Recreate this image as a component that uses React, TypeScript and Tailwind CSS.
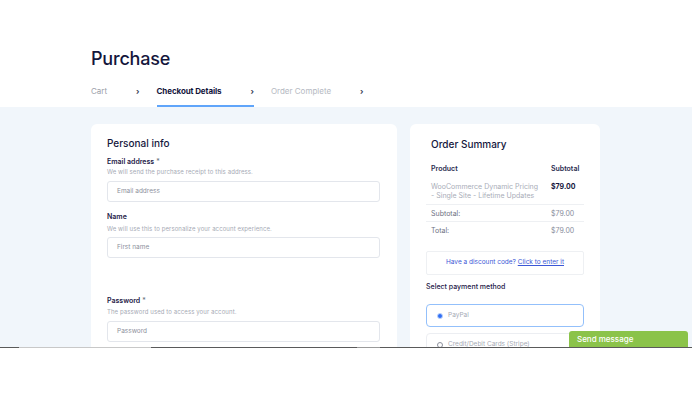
import React from "react";

const font = { fontFamily: "Inter, 'Noto Sans', sans-serif" };

function Tab({ label, active, muted }: { label: string; active?: boolean; muted?: boolean }) {
  return (
    <div
      className={
        "flex items-center h-[30px] border-b-2 " +
        (active ? "border-[#60a5fa]" : "border-transparent")
      }
    >
      <span
        className={
          "text-[8px] leading-[10px] " +
          (active ? "font-bold text-[#14163c] tracking-[-0.1px]" : muted ? "text-[#b5b9c2]" : "text-[#9ca0aa]")
        }
      >
        {label}
      </span>
      <span className="ml-[29px] text-[8px] leading-[10px] font-bold text-[#333a52]">›</span>
    </div>
  );
}

function Field({
  label,
  required,
  desc,
  placeholder,
  labelMt,
  descMt,
  inputMt,
}: {
  label: string;
  required?: boolean;
  desc: string;
  placeholder: string;
  labelMt: string;
  descMt: string;
  inputMt: string;
}) {
  return (
    <div>
      <div className={labelMt + " text-[7px] leading-[10px] font-semibold text-[#1e2047]"}>
        {label}
        {required && <span className="font-normal text-[#6b6f80]"> *</span>}
      </div>
      <div className={descMt + " text-[6px] leading-[8px] tracking-[0.1px] text-[#a6aab5]"}>{desc}</div>
      <div
        className={
          inputMt +
          " h-[21px] rounded-[3px] border border-[#e3e6ec] flex items-center pl-[9px] text-[6.5px] text-[#8d919d]"
        }
      >
        {placeholder}
      </div>
    </div>
  );
}

export default function App() {
  return (
    <div className="relative w-[692px] h-[399px] overflow-hidden bg-white" style={font}>
      {/* Header */}
      <div className="h-[107px] bg-white pl-[91px] flex flex-col">
        <h1 className="mt-[48px] text-[18px] leading-[22px] font-medium text-[#14163c] tracking-[-0.2px]">
          Purchase
        </h1>
        <div className="mt-[7px] flex gap-[17px]">
          <Tab label="Cart" />
          <Tab label="Checkout Details" active />
          <Tab label="Order Complete" muted />
        </div>
      </div>

      {/* Main */}
      <div className="h-[240px] bg-[#f1f6fb] overflow-hidden pl-[91px] pt-[17px] flex gap-[13px] items-start">
        {/* Left card */}
        <div className="w-[306px] h-[300px] bg-white rounded-[6px] pl-[16px] pr-[17px] pt-[13px]">
          <h2 className="text-[10px] leading-[12px] font-medium text-[#14163c]">Personal info</h2>
          <Field
            label="Email address"
            required
            desc="We will send the purchase receipt to this address."
            placeholder="Email address"
            labelMt="mt-[8px]"
            descMt="mt-[1px]"
            inputMt="mt-[5px]"
          />
          <Field
            label="Name"
            desc="We will use this to personalize your account experience."
            placeholder="First name"
            labelMt="mt-[10px]"
            descMt="mt-[3px]"
            inputMt="mt-[4px]"
          />
          <Field
            label="Password"
            required
            desc="The password used to access your account."
            placeholder="Password"
            labelMt="mt-[38px]"
            descMt="mt-[2px]"
            inputMt="mt-[5px]"
          />
        </div>

        {/* Right card */}
        <div className="w-[190px] h-[300px] bg-white rounded-[6px] px-[16px] pt-[14px]">
          <h2 className="pl-[5px] text-[10px] leading-[12px] font-medium text-[#14163c]">Order Summary</h2>
          <div className="mt-[14px] grid grid-cols-[125px_1fr] text-[7px] leading-[9px]">
            <div className="pl-[5px] font-semibold text-[#2a2c4f]">Product</div>
            <div className="font-semibold text-[#2a2c4f]">Subtotal</div>
            <div className="col-span-2 grid grid-cols-[125px_1fr] mt-[9px] pb-[4px] border-b border-[#eef0f3]">
              <div className="pl-[5px] text-[#a9adb8]">
                WooCommerce Dynamic Pricing
                <br />- Single Site - Lifetime Updates
              </div>
              <div className="font-bold text-[#14163c]">$79.00</div>
            </div>
            <div className="col-span-2 grid grid-cols-[125px_1fr] pt-[4px] pb-[3px] border-b border-[#eef0f3]">
              <div className="pl-[5px] text-[#6d7183]">Subtotal:</div>
              <div className="text-[#8a8e9c]">$79.00</div>
            </div>
            <div className="col-span-2 grid grid-cols-[125px_1fr] pt-[4px]">
              <div className="pl-[5px] text-[#6d7183]">Total:</div>
              <div className="text-[#8a8e9c]">$79.00</div>
            </div>
          </div>

          <div className="mt-[16px] h-[24px] border border-[#eef0f3] rounded-[2px] flex items-center justify-center text-[6.5px] text-[#3b57d6]">
            Have a discount code?&nbsp;<span className="underline">Click to enter it</span>
          </div>

          <div className="mt-[7px] text-[7px] leading-[9px] font-medium text-[#1e2047]">Select payment method</div>

          <div className="mt-[13px] h-[23px] rounded-[4px] border border-[#93c0fb] flex items-center pl-[10px]">
            <span className="w-[6px] h-[6px] rounded-full bg-[#2f6ef5] border border-[#bcd3fb]" />
            <span className="ml-[5px] text-[6.5px] text-[#a6aab5]">PayPal</span>
          </div>
          <div className="mt-[6px] h-[23px] rounded-[4px] border border-[#eceef2] flex items-center pl-[10px]">
            <span className="w-[6px] h-[6px] rounded-full border border-[#8d919d]" />
            <span className="ml-[5px] text-[6.5px] text-[#a6aab5]">Credit/Debit Cards (Stripe)</span>
          </div>
        </div>
      </div>

      {/* bottom line */}
      <div className="flex h-[1px]">
        <div className="w-[19px] bg-[#5a5a5a]" />
        <div className="w-[132px] bg-[#c8c8c8]" />
        <div className="w-[206px] bg-[#5a5a5a]" />
        <div className="w-[23px] bg-[#9a9a9a]" />
        <div className="flex-1 bg-[#5a5a5a]" />
      </div>

      {/* Send message widget */}
      <div className="absolute left-[569px] top-[331px] w-[119px] h-[16px] bg-[#8bc34a] rounded-t-[3px] flex items-center pl-[8px] text-[8px] text-white font-medium">
        Send message
      </div>
    </div>
  );
}
